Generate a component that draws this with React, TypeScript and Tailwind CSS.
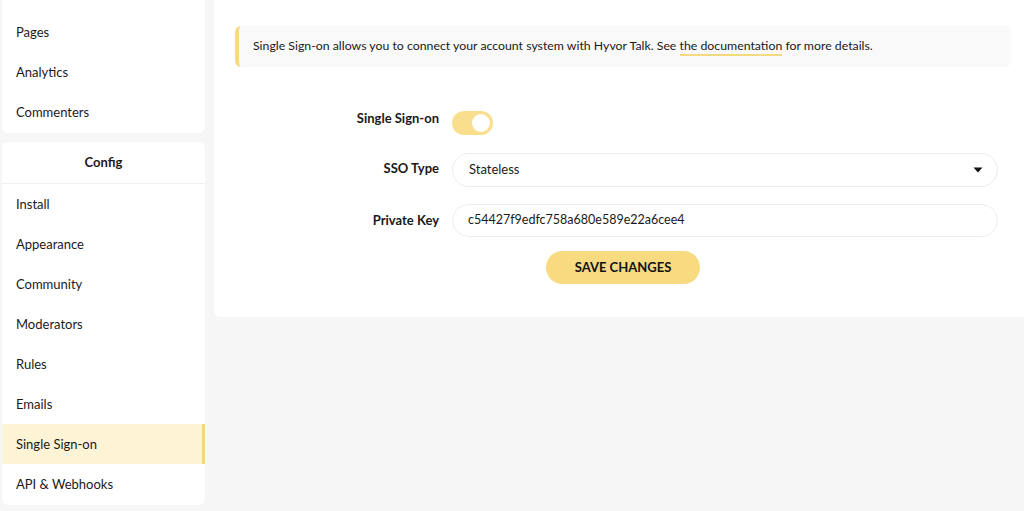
import React from "react";

const topItems = ["Pages", "Analytics", "Commenters"];
const configItems = [
  "Install",
  "Appearance",
  "Community",
  "Moderators",
  "Rules",
  "Emails",
  "Single Sign-on",
  "API & Webhooks",
];

export default function App() {
  return (
    <div
      className="flex h-[511px] w-[1024px] gap-[9px] overflow-hidden bg-[#f6f6f6] pl-[2px] text-[13px] text-[#1a1a1a]"
      style={{ fontFamily: "Lato, 'Noto Sans', sans-serif" }}
    >
      <div className="flex w-[203px] shrink-0 flex-col gap-[9px]">
        <div className="-mt-[10px] flex flex-col rounded-b-[6px] bg-white pt-[22px] pb-[1px]">
          {topItems.map((t) => (
            <div key={t} className="flex h-[40px] items-center px-[14px] pt-[2px]">
              {t}
            </div>
          ))}
        </div>
        <div className="flex flex-col rounded-[6px] bg-white pb-[1px]">
          <div className="flex h-[42px] items-center justify-center border-b border-[#f0f0f0] font-bold">
            Config
          </div>
          {configItems.map((t) => (
            <div
              key={t}
              className={
                t === "Single Sign-on"
                  ? "flex h-[40px] items-center border-r-[3px] border-[#f5d67c] bg-[#fdf3d5] px-[14px] pt-[2px]"
                  : "flex h-[40px] items-center px-[14px] pt-[2px]"
              }
            >
              {t}
            </div>
          ))}
        </div>
      </div>

      <div className="h-[317px] w-[818px] shrink-0 rounded-b-[6px] bg-white px-[21px] pt-[26px]">
        <div className="flex h-[41px] items-center rounded-[6px] border-l-[4px] border-[#f7d981] bg-[#f9f9f9] pl-[14px] text-[12.3px]">
          <span>
            Single Sign-on allows you to connect your account system with Hyvor Talk. See{" "}
            <span className="border-b-2 border-[#f7d981] pb-[1px]">the documentation</span> for more
            details.
          </span>
        </div>

        <div className="mt-[43px] flex flex-col">
          <div className="flex h-[25px] items-center">
            <div className="-mt-[8px] w-[204px] text-right font-bold">Single Sign-on</div>
            <div className="ml-[13px] flex h-[24px] w-[41px] items-center justify-end rounded-full bg-[#f9df8d] pr-[3px]">
              <div className="h-[18px] w-[18px] rounded-full bg-white" />
            </div>
          </div>

          <div className="mt-[18px] flex h-[34px] items-center">
            <div className="-mt-[2px] w-[204px] text-right font-bold">SSO Type</div>
            <div className="ml-[13px] flex h-[34px] w-[546px] items-center justify-between rounded-full border border-[#ececec] bg-white pl-[16px] pr-[14px]">
              <span>Stateless</span>
              <svg width="10" height="6" viewBox="0 0 10 6">
                <path d="M0.5 0.5 L9.5 0.5 L5 5.5 Z" fill="#111" />
              </svg>
            </div>
          </div>

          <div className="mt-[17px] flex h-[33px] items-center">
            <div className="w-[204px] text-right font-bold">Private Key</div>
            <div className="ml-[13px] flex h-[33px] w-[546px] items-center rounded-full border border-[#ececec] bg-white pl-[15px] text-[12.5px]">
              c54427f9edfc758a680e589e22a6cee4
            </div>
          </div>

          <div className="mt-[14px] flex justify-center">
            <button className="h-[33px] w-[154px] rounded-full bg-[#f8da80] text-[13px] font-bold text-[#111]">
              SAVE CHANGES
            </button>
          </div>
        </div>
      </div>
    </div>
  );
}
